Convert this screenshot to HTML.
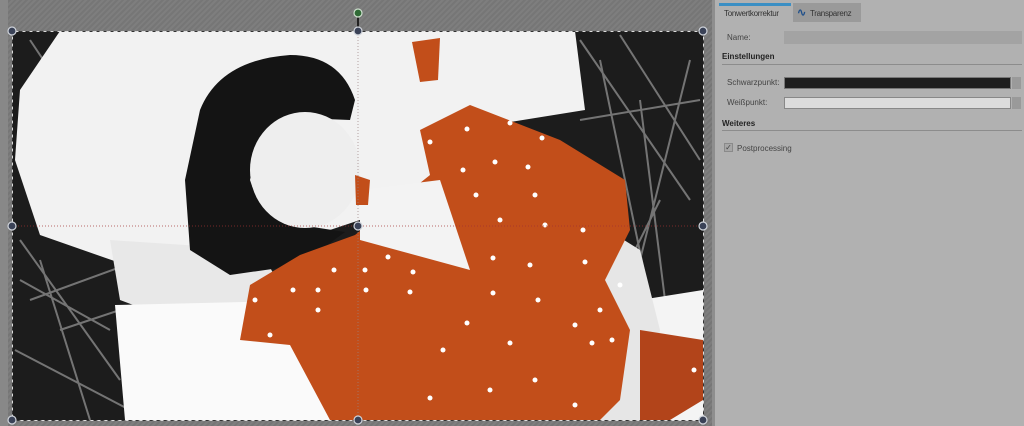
<!DOCTYPE html>
<html><head><meta charset="utf-8"><style>
*{margin:0;padding:0;box-sizing:border-box}
body{width:1024px;height:426px;overflow:hidden;position:relative;font-family:"Liberation Sans",sans-serif;background:#7b7b7b}
#canvas{position:absolute;left:0;top:0;width:712px;height:426px;background:repeating-linear-gradient(135deg,#7e7e7e 0 2px,#767676 2px 4px)}
#strip{position:absolute;left:0;top:0;width:8px;height:426px;background:#888}
#sep{position:absolute;left:712px;top:0;width:3px;height:426px;background:#8e8e8e}
#panel{position:absolute;left:715px;top:0;width:309px;height:426px;background:#b1b1b1;font-size:8px;color:#333}
.t{position:absolute;white-space:nowrap}
</style></head><body>
<div id="canvas"></div><div id="strip"></div>
<svg width="712" height="426" style="position:absolute;left:0;top:0">
<defs><clipPath id="c"><rect x="12" y="31" width="691" height="389"/></clipPath></defs>
<g clip-path="url(#c)">
<rect x="12" y="31" width="691" height="389" fill="#1c1c1c"/>
<g stroke="#8a8a8a" stroke-width="2" opacity=".8">
<path d="M20 240L120 380M30 300L140 260M15 350L130 410M40 260L90 420M60 330L150 300M20 280L110 330M580 40L690 200M600 60L650 300M620 35L700 160M640 100L680 420M660 200L610 300M690 60L640 260M30 40L70 100M50 60L120 40M580 120L700 100"/>
</g>
<path d="M60 31L575 31L585 110L460 130L420 200L300 240L140 270L40 235L15 160L20 90Z" fill="#f2f2f2"/>
<path d="M110 240L260 250L300 320L200 330L120 300Z" fill="#e8e8e8"/>
<path d="M115 305L330 300L520 420L125 420Z" fill="#fafafa"/>
<path d="M640 300L703 290L703 420L660 420Z" fill="#f4f4f4"/>
<path d="M600 225L640 250L660 330L650 420L560 420L600 350Z" fill="#e6e6e6"/>
<path d="M200 110Q220 60 290 55Q340 55 355 100L350 120L300 118Q260 130 250 180Q260 215 300 225L345 232L300 265L230 275L190 250L185 180Z" fill="#141414"/>
<ellipse cx="305" cy="170" rx="55" ry="58" fill="#eeeeee"/>
<path d="M420 130L470 105L560 140L625 180L630 230L605 280L630 330L620 400L600 420L330 420L290 345L240 340L250 285L300 255L355 235L380 215L430 175Z" fill="#c24e1a"/>
<path d="M360 190L440 180L470 270L360 240Z" fill="#f3f3f3"/>
<path d="M640 330L703 340L703 400L670 420L640 420Z" fill="#b2441a"/>
<path d="M412 42L440 38L438 80L420 82Z" fill="#c24e1a"/>
<path d="M355 175L370 180L368 205L356 205Z" fill="#c24e1a"/>
<path d="M300 355L320 345L325 365L308 372Z" fill="#c24e1a"/>
<path d="M355 415L380 410L380 420L355 420Z" fill="#c24e1a"/>
<g fill="#fff">
<circle cx="467" cy="129" r="2.5"/><circle cx="510" cy="123" r="2.5"/><circle cx="542" cy="138" r="2.5"/><circle cx="430" cy="142" r="2.5"/><circle cx="463" cy="170" r="2.5"/><circle cx="495" cy="162" r="2.5"/><circle cx="528" cy="167" r="2.5"/><circle cx="476" cy="195" r="2.5"/><circle cx="535" cy="195" r="2.5"/><circle cx="500" cy="220" r="2.5"/><circle cx="545" cy="225" r="2.5"/><circle cx="583" cy="230" r="2.5"/><circle cx="493" cy="258" r="2.5"/><circle cx="530" cy="265" r="2.5"/><circle cx="365" cy="270" r="2.5"/><circle cx="388" cy="257" r="2.5"/><circle cx="413" cy="272" r="2.5"/><circle cx="334" cy="270" r="2.5"/><circle cx="366" cy="290" r="2.5"/><circle cx="410" cy="292" r="2.5"/><circle cx="293" cy="290" r="2.5"/><circle cx="318" cy="290" r="2.5"/><circle cx="255" cy="300" r="2.5"/><circle cx="270" cy="335" r="2.5"/><circle cx="318" cy="310" r="2.5"/><circle cx="493" cy="293" r="2.5"/><circle cx="538" cy="300" r="2.5"/><circle cx="467" cy="323" r="2.5"/><circle cx="510" cy="343" r="2.5"/><circle cx="443" cy="350" r="2.5"/><circle cx="575" cy="325" r="2.5"/><circle cx="600" cy="310" r="2.5"/><circle cx="592" cy="343" r="2.5"/><circle cx="535" cy="380" r="2.5"/><circle cx="490" cy="390" r="2.5"/><circle cx="430" cy="398" r="2.5"/><circle cx="575" cy="405" r="2.5"/><circle cx="612" cy="340" r="2.5"/><circle cx="694" cy="370" r="2.5"/><circle cx="585" cy="262" r="2.5"/><circle cx="620" cy="285" r="2.5"/>
</g>
</g>
<line x1="12" y1="226" x2="703" y2="226" stroke="#a03030" stroke-width="1" stroke-dasharray="1 2" opacity=".7"/>
<line x1="358" y1="31" x2="358" y2="420" stroke="#9a8080" stroke-width="1" stroke-dasharray="1 2" opacity=".7"/>
<rect x="12.5" y="31.5" width="691" height="389" fill="none" stroke="#333" stroke-dasharray="4 3"/>
<rect x="12.5" y="31.5" width="691" height="389" fill="none" stroke="#ddd" stroke-dasharray="3 4" stroke-dashoffset="4"/>
<line x1="358" y1="14" x2="358" y2="31" stroke="#222" stroke-width="2"/>
<g fill="#3a4257" stroke="#cfd3da" stroke-width="1.2">
<circle cx="12" cy="31" r="4"/><circle cx="358" cy="31" r="4"/><circle cx="703" cy="31" r="4"/>
<circle cx="12" cy="226" r="4"/><circle cx="358" cy="226" r="4"/><circle cx="703" cy="226" r="4"/>
<circle cx="12" cy="420" r="4"/><circle cx="358" cy="420" r="4"/><circle cx="703" cy="420" r="4"/>
</g>
<circle cx="358" cy="13" r="4" fill="#2f6a35" stroke="#cfe0cf" stroke-width="1.2"/>
</svg>
<div id="sep"></div>
<div id="panel">
<div class="t" style="left:4px;top:3px;width:72px;height:3px;background:#3b8fc4"></div>
<div class="t" style="left:9px;top:9px;color:#333;letter-spacing:-0.3px">Tonwertkorrektur</div>
<div class="t" style="left:78px;top:3px;width:68px;height:19px;background:#9a9a9a"></div>
<div class="t" style="left:82px;top:6px;font-size:11px;color:#1f4f8a;font-weight:bold">∿</div>
<div class="t" style="left:95px;top:9px;color:#333;letter-spacing:-0.3px">Transparenz</div>
<div class="t" style="left:12px;top:33px;color:#444">Name:</div>
<div class="t" style="left:69px;top:31px;width:238px;height:13px;background:#a3a3a3"></div>
<div class="t" style="left:7px;top:52px;font-weight:bold;color:#222">Einstellungen</div>
<div class="t" style="left:7px;top:64px;width:300px;height:1px;background:#8c8c8c"></div>
<div class="t" style="left:12px;top:78px;color:#444">Schwarzpunkt:</div>
<div class="t" style="left:69px;top:77px;width:227px;height:12px;background:#1e1e1e;border:1px solid #777"></div>
<div class="t" style="left:297px;top:77px;width:9px;height:12px;background:#9a9a9a"></div>
<div class="t" style="left:12px;top:98px;color:#444">Weißpunkt:</div>
<div class="t" style="left:69px;top:97px;width:227px;height:12px;background:#dcdcdc;border:1px solid #888"></div>
<div class="t" style="left:297px;top:97px;width:9px;height:12px;background:#9a9a9a"></div>
<div class="t" style="left:7px;top:119px;font-weight:bold;color:#222">Weiteres</div>
<div class="t" style="left:7px;top:130px;width:300px;height:1px;background:#8c8c8c"></div>
<div class="t" style="left:9px;top:143px;width:9px;height:9px;background:#a6a6a6;border:1px solid #8a8a8a;font-size:8px;line-height:8px;text-align:center;color:#444">✓</div>
<div class="t" style="left:22px;top:144px;color:#444">Postprocessing</div>
</div>
</body></html>
